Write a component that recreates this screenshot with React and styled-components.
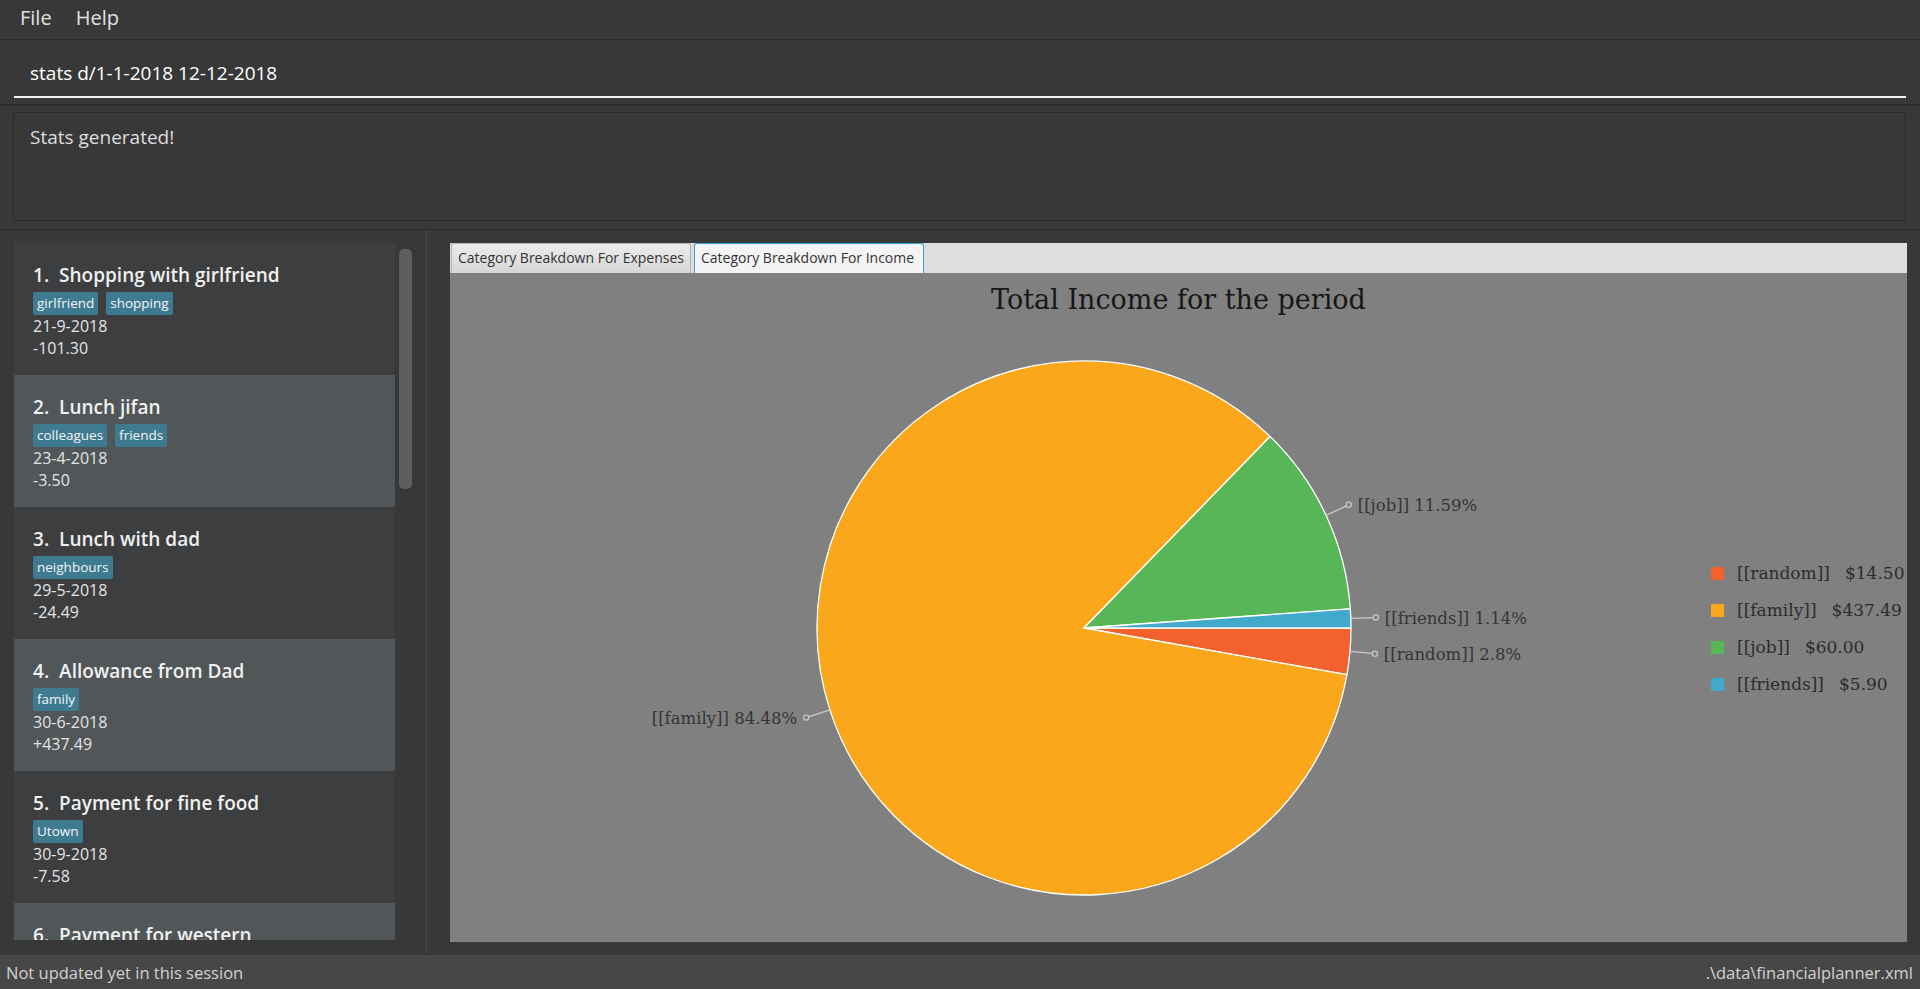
import React from "react";
import styled, { createGlobalStyle } from "styled-components";

const GlobalStyle = createGlobalStyle`
  html, body {
    margin: 0;
    padding: 0;
    background: #383838;
    overflow: hidden;
  }
  * { box-sizing: border-box; }
`;

const UI_FONT = `"Open Sans", "Noto Sans", sans-serif`;
const CHART_FONT = `"DejaVu Serif", "Liberation Serif", serif`;

const Window = styled.div`
  width: 1920px;
  height: 989px;
  display: flex;
  flex-direction: column;
  background: #383838;
  font-family: ${UI_FONT};
  color: #e6e6e6;
`;

const MenuBar = styled.div`
  height: 39px;
  flex: none;
  display: flex;
  padding: 5px 0 0 8px;
  background: #383838;
`;

const MenuItem = styled.div`
  padding: 0 12px;
  font-size: 20px;
  line-height: 26px;
  color: #e2e2e2;
`;

const CommandPane = styled.div`
  height: 65px;
  flex: none;
  border-top: 1px solid #2c2c2c;
  padding: 0 14px;
`;

const CommandField = styled.div`
  margin-top: 20px;
  padding: 0 16px 10px;
  font-size: 19px;
  line-height: 26px;
  color: #ffffff;
  border-bottom: 2px solid #f2f2f2;
`;

const ResultPane = styled.div`
  height: 125px;
  flex: none;
  border-top: 2px solid #2c2c2c;
  padding: 6px 14px 7px 13px;
`;

const ResultBox = styled.div`
  height: 109px;
  border: 1px solid #2b2b2b;
  padding: 11px 16px;
  font-size: 19px;
  line-height: 26px;
  color: #dedede;
`;

const Split = styled.div`
  height: 726px;
  flex: none;
  display: flex;
  border-top: 1px solid #2c2c2c;
`;

const ListPane = styled.div`
  width: 426px;
  flex: none;
  padding: 13px 13px 15px 14px;
  display: flex;
`;

const ListView = styled.div`
  flex: 1;
  display: flex;
  overflow: hidden;
`;

const Cells = styled.div`
  width: 381px;
  flex: none;
  overflow: hidden;
`;

const ScrollTrack = styled.div`
  flex: 1;
  padding: 6px 1px 0 4px;
`;

const Thumb = styled.div`
  height: 240px;
  border-radius: 5px;
  background: #5e5e5e;
`;

const Cell = styled.div`
  height: 132px;
  padding: 18px 0 0 19px;
  background: ${(p) => (p.$even ? "#515658" : "#3c3e3f")};
  overflow: hidden;
`;

const CellTitle = styled.div`
  display: flex;
  font-size: 19px;
  font-weight: 600;
  line-height: 28px;
  color: #f0f0f0;
  white-space: nowrap;
`;

const CellIndex = styled.span`
  margin-right: 10px;
`;

const Tags = styled.div`
  display: flex;
  gap: 8px;
  margin-top: 3px;
  height: 23px;
`;

const Tag = styled.span`
  background: #3e7b91;
  color: #f4f4f4;
  font-size: 13.5px;
  line-height: 23px;
  padding: 0 4px;
  border-radius: 2px;
`;

const SmallLine = styled.div`
  font-size: 16px;
  line-height: 22px;
  color: #e4e4e4;
`;

const Divider = styled.div`
  width: 1px;
  flex: none;
  background: #4a4a4a;
  margin-bottom: 1px;
`;

const StatsPane = styled.div`
  flex: 1;
  padding: 13px 13px 13px 23px;
  display: flex;
`;

const TabPane = styled.div`
  flex: 1;
  display: flex;
  flex-direction: column;
`;

const TabHeader = styled.div`
  height: 30px;
  flex: none;
  display: flex;
  align-items: flex-end;
  gap: 3px;
  padding-left: 1px;
  background: #dedede;
`;

const Tab = styled.div`
  width: ${(p) => p.$w}px;
  height: 30px;
  padding: 0 0 0 6px;
  font-size: 14px;
  line-height: 28px;
  color: #333333;
  white-space: nowrap;
  border: 1px solid ${(p) => (p.$active ? "#3aa0d0" : "#b2b2b2")};
  border-bottom: none;
  border-radius: 3px 3px 0 0;
  background: ${(p) =>
    p.$active ? "#f4f4f4" : "linear-gradient(#ececec, #d6d6d6)"};
`;

const ChartArea = styled.div`
  flex: 1;
  display: flex;
  flex-direction: column;
  background: #808080;
`;

const ChartTitle = styled.div`
  height: 42px;
  flex: none;
  padding-top: 11px;
  text-align: center;
  font-family: ${CHART_FONT};
  font-size: 27px;
  line-height: 31px;
  color: #171717;
`;

const PlotRow = styled.div`
  flex: 1;
  display: flex;
`;

const PieSvg = styled.svg`
  width: 1250px;
  height: 627px;
  flex: none;
  display: block;
  text {
    font-family: ${CHART_FONT};
    font-size: 16.5px;
    fill: #353535;
  }
`;

const Legend = styled.div`
  flex: 1;
  display: flex;
  flex-direction: column;
  justify-content: center;
  padding-left: 11px;
`;

const LegendRow = styled.div`
  height: 37px;
  display: flex;
  align-items: center;
  white-space: nowrap;
  font-family: ${CHART_FONT};
  font-size: 17px;
  color: #2c2c2c;
`;

const Swatch = styled.span`
  width: 13px;
  height: 13px;
  margin-right: 13px;
  background: ${(p) => p.$color};
`;

const LegendValue = styled.span`
  margin-left: 15px;
`;

const StatusBar = styled.div`
  height: 34px;
  flex: none;
  display: flex;
  justify-content: space-between;
  align-items: center;
  padding: 2px 7px 0 6px;
  background: #474747;
  font-size: 16.5px;
  line-height: 22px;
  color: #d2d2d2;
`;

const expenses = [
  { name: "Shopping with girlfriend", tags: ["girlfriend", "shopping"], date: "21-9-2018", amount: "-101.30" },
  { name: "Lunch jifan", tags: ["colleagues", "friends"], date: "23-4-2018", amount: "-3.50" },
  { name: "Lunch with dad", tags: ["neighbours"], date: "29-5-2018", amount: "-24.49" },
  { name: "Allowance from Dad", tags: ["family"], date: "30-6-2018", amount: "+437.49" },
  { name: "Payment for fine food", tags: ["Utown"], date: "30-9-2018", amount: "-7.58" },
  { name: "Payment for western" },
];

const slices = [
  { name: "random", value: 14.5, color: "#f3622d", pct: "2.8%", money: "$14.50" },
  { name: "family", value: 437.49, color: "#fba71b", pct: "84.48%", money: "$437.49" },
  { name: "job", value: 60, color: "#57b757", pct: "11.59%", money: "$60.00" },
  { name: "friends", value: 5.9, color: "#41a9c9", pct: "1.14%", money: "$5.90" },
];

const CX = 634;
const CY = 313;
const R = 267;

function pt(deg, r) {
  const a = (deg * Math.PI) / 180;
  return [CX + r * Math.cos(a), CY + r * Math.sin(a)];
}

function PieChart() {
  const total = slices.reduce((s, d) => s + d.value, 0);
  let start = 0;
  const parts = slices.map((d) => {
    const sweep = (d.value / total) * 360;
    const a0 = start;
    const a1 = start + sweep;
    start = a1;
    const [x0, y0] = pt(a0, R);
    const [x1, y1] = pt(a1, R);
    const large = sweep > 180 ? 1 : 0;
    const path = `M ${CX} ${CY} L ${x0} ${y0} A ${R} ${R} 0 ${large} 1 ${x1} ${y1} Z`;
    const mid = (a0 + a1) / 2;
    const [ex, ey] = pt(mid, R);
    const [dx, dy] = pt(mid, R + 25);
    const right = Math.cos((mid * Math.PI) / 180) >= 0;
    return { ...d, path, ex, ey, dx, dy, right };
  });
  return (
    <PieSvg viewBox="0 0 1250 627">
      {parts.map((p) => (
        <path key={p.name} d={p.path} fill={p.color} stroke="#ffffff" strokeWidth="1.3" strokeLinejoin="round" />
      ))}
      {parts.map((p) => (
        <g key={p.name + "-label"}>
          <line x1={p.ex} y1={p.ey} x2={p.dx} y2={p.dy} stroke="#cbcbcb" strokeWidth="1.3" />
          <circle cx={p.dx} cy={p.dy} r="2.6" fill="#808080" stroke="#cbcbcb" strokeWidth="1.2" />
          <text x={p.right ? p.dx + 9 : p.dx - 9} y={p.dy + 6.5} textAnchor={p.right ? "start" : "end"}>
            {`[[${p.name}]] ${p.pct}`}
          </text>
        </g>
      ))}
    </PieSvg>
  );
}

export default function App() {
  return (
    <>
      <GlobalStyle />
      <Window>
        <MenuBar>
          <MenuItem>File</MenuItem>
          <MenuItem>Help</MenuItem>
        </MenuBar>
        <CommandPane>
          <CommandField>stats d/1-1-2018 12-12-2018</CommandField>
        </CommandPane>
        <ResultPane>
          <ResultBox>Stats generated!</ResultBox>
        </ResultPane>
        <Split>
          <ListPane>
            <ListView>
              <Cells>
                {expenses.map((e, i) => (
                  <Cell key={i} $even={i % 2 === 1}>
                    <CellTitle>
                      <CellIndex>{i + 1}.</CellIndex>
                      <span>{e.name}</span>
                    </CellTitle>
                    {e.tags && (
                      <Tags>
                        {e.tags.map((t) => (
                          <Tag key={t}>{t}</Tag>
                        ))}
                      </Tags>
                    )}
                    {e.date && <SmallLine>{e.date}</SmallLine>}
                    {e.amount && <SmallLine>{e.amount}</SmallLine>}
                  </Cell>
                ))}
              </Cells>
              <ScrollTrack>
                <Thumb />
              </ScrollTrack>
            </ListView>
          </ListPane>
          <Divider />
          <StatsPane>
            <TabPane>
              <TabHeader>
                <Tab $w={240}>Category Breakdown For Expenses</Tab>
                <Tab $w={230} $active>Category Breakdown For Income</Tab>
              </TabHeader>
              <ChartArea>
                <ChartTitle>Total Income for the period</ChartTitle>
                <PlotRow>
                  <PieChart />
                  <Legend>
                    {slices.map((s) => (
                      <LegendRow key={s.name}>
                        <Swatch $color={s.color} />
                        <span>{`[[${s.name}]]`}</span>
                        <LegendValue>{s.money}</LegendValue>
                      </LegendRow>
                    ))}
                  </Legend>
                </PlotRow>
              </ChartArea>
            </TabPane>
          </StatsPane>
        </Split>
        <StatusBar>
          <span>Not updated yet in this session</span>
          <span>.\data\financialplanner.xml</span>
        </StatusBar>
      </Window>
    </>
  );
}
